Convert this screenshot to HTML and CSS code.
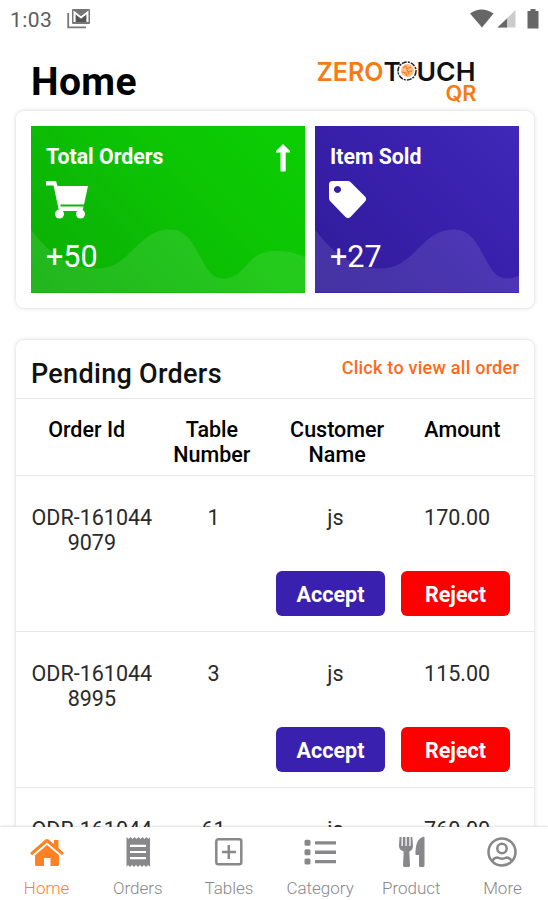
FILE: index.html
```
<!DOCTYPE html>
<html lang="en">
  <head>
    <meta charset="UTF-8" />
    <meta name="viewport" content="width=device-width, initial-scale=1.0" />
    <title>Home</title>
    <link rel="stylesheet" href="styles.css">
  </head>
  <body>
    <div class="status">
      <span class="time">1:03</span>
      <svg class="mail" width="24" height="20" viewBox="0 0 24 20">
        <path d="M1.2 4v14.3H19" fill="none" stroke="#777" stroke-width="1.8" />
        <rect x="5" y="0" width="18" height="15" rx="1" fill="#777" />
        <path d="M7.500 13V3.500L14 8.500l6.500-5V13" fill="none" stroke="#fff" stroke-width="2" />
        <path d="M9 13V6l5 4 5-4v7z" fill="#555" />
      </svg>
      <svg class="signals" width="70" height="20" viewBox="0 0 70 20">
        <path d="M0 4.500Q11.500-3.500 23.500 4.500L12 18.500z" fill="#666" />
        <path d="M45.500 1v17.500H27.500z" fill="#ccc" />
        <path d="M37 9.500v9h-9.500z" fill="#666" />
        <path d="M57.500 2h3V0h5v2h3v17.500h-11z" fill="#666" />
      </svg>
    </div>

    <div class="header">
      <h1>Home</h1>
      <svg class="logo" width="162" height="50" viewBox="0 0 162 50">
        <text class="orange" x="0.500" y="22" textLength="67" lengthAdjust="spacingAndGlyphs">ZERO</text>
        <text x="67.500" y="22">T</text>
        <circle cx="91" cy="12" r="9" fill="#fff" stroke="#222" stroke-width="1.500" stroke-dasharray="5 1.200 2 1" />
        <circle cx="91.500" cy="11.500" r="6.500" fill="#ffc08c" />
        <path d="M87 9l3-2 1 3 4-2M86 13l4 1 1 3M92 13l4-1M91 11l2 4" fill="none" stroke="#f58220" stroke-width="1.300" />
        <text x="100.500" y="22" textLength="59" lengthAdjust="spacingAndGlyphs">UCH</text>
        <text class="orange qr" x="129.500" y="41.500" textLength="31" lengthAdjust="spacingAndGlyphs">QR</text>
      </svg>
    </div>

    <div class="card stats">
      <div class="tile green">
        <svg class="wave" width="274" height="166" viewBox="0 0 274 166">
          <path d="M0 103C14 122 34 142 66 142C100 142 106 103 139 103C169 103 168 152 192 152C217 152 213 124.500 245 124.500C258 124.500 267 127 274 131V166H0z" />
        </svg>
        <h3>Total Orders</h3>
        <svg class="icon" width="43" height="38" viewBox="0 0 43 38">
          <path d="M0 0h10l1.500 5H42l-4 18.500H14.500V25.500H37.500L36.500 30H13L7.500 4.500H0z" fill="#fff" />
          <circle cx="13.500" cy="33" r="4.500" fill="#fff" />
          <circle cx="34.500" cy="33" r="4.500" fill="#fff" />
        </svg>
        <p>+50</p>
        <svg class="arrow" width="14" height="28" viewBox="0 0 14 28">
          <path d="M7 0l7 7v1.500H9.700V26.500q0 1-1 1H5.500q-1 0-1-1V8.500H0V7z" fill="#fff" />
        </svg>
      </div>
      <div class="tile blue">
        <svg class="wave" width="274" height="166" viewBox="0 0 274 166">
          <path d="M0 103C14 122 34 142 66 142C100 142 106 103 139 103C169 103 168 152 192 152C217 152 213 124.500 245 124.500C258 124.500 267 127 274 131V166H0z" />
        </svg>
        <h3>Item Sold</h3>
        <svg class="icon tag" width="43" height="38" viewBox="0 0 43 38">
          <path fill-rule="evenodd" d="M3.500 0H18.500q2 0 3.500 1.400L36 15.500q2.300 2.500 0 5L21.500 36q-2.500 2.300-5 0L1.500 20.500Q0 19 0 17V3.500Q0 0 3.500 0zM8.500 5a3.500 3.500 0 1 0 .01 0z" fill="#fff" />
        </svg>
        <p>+27</p>
      </div>
    </div>

    <div class="card orders">
      <div class="orders-top">
        <h2>Pending Orders</h2>
        <a href="#">Click to view all order</a>
      </div>
      <div class="thead">
        <span>Order Id</span>
        <span>Table<br>Number</span>
        <span>Customer<br>Name</span>
        <span>Amount</span>
      </div>
      <div class="order">
        <div class="cells">
          <span>ODR-161044<br>9079</span>
          <span>1</span>
          <span>js</span>
          <span>170.00</span>
        </div>
        <div class="buttons">
          <button class="accept">Accept</button>
          <button class="reject">Reject</button>
        </div>
      </div>
      <div class="order">
        <div class="cells">
          <span>ODR-161044<br>8995</span>
          <span>3</span>
          <span>js</span>
          <span>115.00</span>
        </div>
        <div class="buttons">
          <button class="accept">Accept</button>
          <button class="reject">Reject</button>
        </div>
      </div>
      <div class="order">
        <div class="cells">
          <span>ODR-161044</span>
          <span>61</span>
          <span>js</span>
          <span>760.00</span>
        </div>
      </div>
    </div>

    <div class="nav">
      <a class="active" href="#">
        <svg width="36" height="32" viewBox="0 0 36 32">
          <path d="M1 17L16.500 3.500q1.500-1.200 3 0L25 8.200V4h4.500v8L35 17l-2 2.300L18 6.500 3 19.300z" />
          <path d="M18 9L30 19.300V28.500q0 1.500-1.500 1.500H21.500V22h-6.500v8H7.500Q6 30 6 28.500V19.300z" />
        </svg>
        <span>Home</span>
      </a>
      <a href="#">
        <svg width="36" height="32" viewBox="0 0 36 32">
          <path fill-rule="evenodd" d="M6.500 1l2 2 2-2 2 2 2-2 2 2 2-2 2 2 2-2 2 2 2-2 2 2 1.500-2v30l-2-2-2 2-2-2-2 2-2-2-2 2-2-2-2 2-2-2-2 2-2-2-1.500 2zM10 8.700v2.200h16v-2.200zM10 14.900v2.200h16v-2.200zM10 21.100v2.200h16v-2.200z" />
        </svg>
        <span>Orders</span>
      </a>
      <a href="#">
        <svg width="36" height="32" viewBox="0 0 36 32">
          <g fill="none" stroke="#88888a" stroke-width="2.500">
            <rect x="5.300" y="3.300" width="25" height="25" rx="2" />
            <path d="M17.800 9v14M11 16h14" />
          </g>
        </svg>
        <span>Tables</span>
      </a>
      <a href="#">
        <svg width="36" height="32" viewBox="0 0 36 32">
          <rect x="2.500" y="3.800" width="6" height="6" rx="1.500" />
          <rect x="2.500" y="13.200" width="6" height="6" rx="1.500" />
          <rect x="2.500" y="22.600" width="6" height="6" rx="1.500" />
          <path d="M13 5.200h21v3.300H13zM13 14.600h21v3.300H13zM13 24h21v3.300H13z" />
        </svg>
        <span>Category</span>
      </a>
      <a href="#">
        <svg width="36" height="32" viewBox="0 0 36 32">
          <path d="M6.500 1h2v9h1.300V1h2.600v9h1.300V1h2.600v9h1.300V1h1.700l.7 9q0 4-3.700 5.500l.7 14q0 1.500-1.500 1.500h-3.500Q10 31 10 29.500l.7-14Q6 14 6 10z" />
          <path d="M31.500 1.500v28q0 1.500-1.500 1.500h-2.500q-1.500 0-1.500-1.500V19h-3.500Q22 4 29.500 1q2-.5 2 .5z" />
        </svg>
        <span>Product</span>
      </a>
      <a href="#">
        <svg width="36" height="32" viewBox="0 0 36 32">
          <g fill="none" stroke="#88888a" stroke-width="2.500">
            <circle cx="18" cy="16" r="13.500" />
            <circle cx="18" cy="12.500" r="4.700" />
            <path d="M8.500 25.500Q9 22 13.500 21.500Q18 24 22.500 21.500Q27 22 27.500 25.500" />
          </g>
        </svg>
        <span>More</span>
      </a>
    </div>
  </body>
</html>
```
FILE: styles.css
```
* {
  padding: 0;
  margin: 0;
  box-sizing: border-box;
}
body {
  display: flex;
  flex-direction: column;
  height: 900px;
  overflow: hidden;
  background: #fff;
  color: #111;
  font-family: Roboto, "Liberation Sans", sans-serif;
}
a {
  text-decoration: none;
}
.status {
  flex: none;
  display: flex;
  height: 40px;
  padding: 9px 8px 0 10px;
}
.time {
  width: 57px;
  color: #5c5c5c;
  font-size: 21px;
  line-height: 22px;
  letter-spacing: 0.4px;
}
.signals {
  margin-left: auto;
}
.header {
  flex: none;
  display: flex;
  justify-content: space-between;
  height: 71px;
  padding: 19px 70px 0 31px;
}
h1 {
  font-size: 39px;
  line-height: 46px;
  font-weight: 700;
  letter-spacing: 0.4px;
  color: #000;
}
.logo {
  overflow: visible;
  font-family: Inter, "Liberation Sans", sans-serif;
  font-size: 26px;
  font-weight: 600;
  fill: #111;
}
.logo .orange {
  fill: #f57c14;
}
.logo .qr {
  font-size: 21px;
}
.card {
  margin: 0 14px 0 16px;
  border-radius: 8px;
  background: #fff;
  box-shadow: 0 0 4px rgba(0, 0, 0, 0.18);
}
.stats {
  flex: none;
  display: flex;
  gap: 10px;
  height: 197px;
  padding: 15px 15px 15px;
}
.tile {
  position: relative;
  overflow: hidden;
  padding: 17px 15px;
  color: #fff;
}
.green {
  width: 274px;
  background: linear-gradient(45deg, #0bad06, #0cc603 65%, #0bce02);
}
.blue {
  flex: 1;
  background: linear-gradient(45deg, #301b98, #3921ae 60%, #4028b8);
}
.wave {
  position: absolute;
  left: 0;
  top: 0;
  height: 167px;
  fill: rgba(255, 255, 255, 0.1);
}
.tile h3 {
  position: relative;
  font-size: 21.3px;
  line-height: 27px;
}
.icon {
  display: block;
  position: relative;
  margin-top: 11px;
}
.tag {
  margin-left: -1px;
}
.tile p {
  position: relative;
  margin-top: 20px;
  font-size: 30.5px;
  line-height: 36px;
}
.arrow {
  position: absolute;
  right: 15px;
  top: 18px;
}
.orders {
  flex: 1;
  min-height: 0;
  margin-top: 32px;
  border-radius: 8px 8px 0 0;
  overflow: hidden;
}
.orders-top {
  display: flex;
  justify-content: space-between;
  height: 59px;
  padding: 17px 15px 0;
  border-bottom: 1px solid #e8e8e8;
}
h2 {
  font-size: 27px;
  line-height: 34px;
  font-weight: 500;
  letter-spacing: 0.3px;
}
.orders-top a {
  color: #ff6a1a;
  font-size: 18px;
  line-height: 21px;
  font-weight: 500;
  letter-spacing: 0.25px;
}
.thead,
.cells {
  display: grid;
  grid-template-columns: repeat(4, 1fr);
  text-align: center;
  font-size: 21.5px;
  line-height: 25px;
}
.thead {
  height: 77px;
  padding: 18px 9px 0 8px;
  border-bottom: 1px solid #e8e8e8;
  font-weight: 500;
  color: #000;
}
.order {
  height: 156px;
  padding: 29px 16px 0 15px;
  border-bottom: 1px solid #e8e8e8;
}
.cells {
  height: 66px;
  color: #2a2a2a;
}
.buttons {
  display: flex;
  justify-content: flex-end;
  gap: 16px;
  padding-right: 8px;
}
button {
  width: 109px;
  height: 45px;
  padding-top: 2px;
  border: none;
  border-radius: 6px;
  color: #fff;
  font-family: inherit;
  font-size: 21.5px;
  font-weight: 700;
}
.accept {
  background: #3a20ae;
}
.reject {
  background: #fe0000;
}
.nav {
  flex: none;
  position: relative;
  display: flex;
  height: 73px;
  padding: 9px 0 0 1px;
  background: #fff;
  box-shadow: 0 -1px 2px rgba(0, 0, 0, 0.12);
}
.nav a {
  flex: 1;
  display: flex;
  flex-direction: column;
  align-items: center;
  gap: 10px;
  color: #88888a;
  fill: #88888a;
  font-size: 17px;
  font-weight: 300;
  line-height: 20px;
}
.nav .active {
  color: #ff8126;
  fill: #ff8126;
}
```
